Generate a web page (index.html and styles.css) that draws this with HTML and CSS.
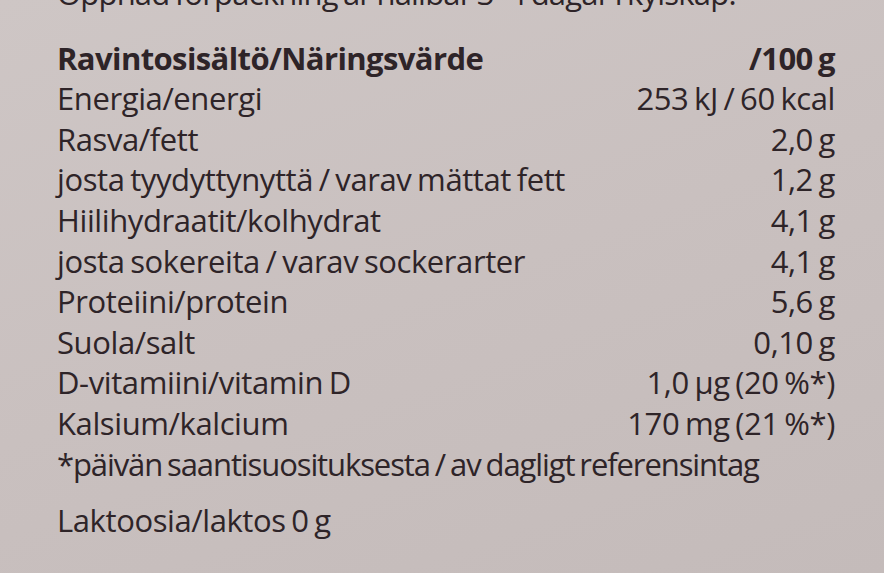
FILE: index.html
```html
<!DOCTYPE html>
<html lang="fi">
<head>
<meta charset="utf-8">
<link rel="stylesheet" href="styles.css">
</head>
<body>
<div class="label">
  <p class="cut">Öppnad förpackning är hållbar 3–4 dagar i kylskåp.</p>
  <div class="table">
    <div class="row head"><span>Ravintosisältö/Näringsvärde</span><span>/100 g</span></div>
    <div class="row"><span>Energia/energi</span><span>253 kJ / 60 kcal</span></div>
    <div class="row"><span>Rasva/fett</span><span>2,0 g</span></div>
    <div class="row"><span>josta tyydyttynyttä / varav mättat fett</span><span>1,2 g</span></div>
    <div class="row"><span>Hiilihydraatit/kolhydrat</span><span>4,1 g</span></div>
    <div class="row"><span>josta sokereita / varav sockerarter</span><span>4,1 g</span></div>
    <div class="row"><span>Proteiini/protein</span><span>5,6 g</span></div>
    <div class="row"><span>Suola/salt</span><span>0,10 g</span></div>
    <div class="row"><span>D-vitamiini/vitamin D</span><span>1,0 µg (20 %*)</span></div>
    <div class="row"><span>Kalsium/kalcium</span><span>170 mg (21 %*)</span></div>
  </div>
  <p class="note">*päivän saantisuosituksesta / av dagligt referensintag</p>
  <p class="lactose">Laktoosia/laktos 0 g</p>
</div>
</body>
</html>
```
FILE: styles.css
```css
html, body {
  margin: 0;
  padding: 0;
}
body {
  width: 884px;
  height: 573px;
  overflow: hidden;
  background: linear-gradient(160deg, #cec6c5 0%, #c9c0bf 50%, #c4bbba 100%);
  color: #2e2428;
  font-family: "Open Sans", "Noto Sans", sans-serif;
  font-size: 31px;
  font-weight: 440;
  font-stretch: 92%;
  letter-spacing: -0.4px;
  word-spacing: -2px;
}
.label {
  padding-left: 57px;
  width: 778px;
}
p {
  margin: 0;
  line-height: 40.6px;
}
.cut {
  margin-top: -27px;
  height: 40.6px;
  letter-spacing: -0.8px;
}
.table {
  margin-top: 24px;
}
.row {
  display: flex;
  justify-content: space-between;
  line-height: 40.6px;
}
.head {
  font-weight: 700;
  font-stretch: 95%;
  letter-spacing: -0.6px;
}
.note {
  letter-spacing: -1.1px;
}
.lactose {
  margin-top: 16px;
}
```
